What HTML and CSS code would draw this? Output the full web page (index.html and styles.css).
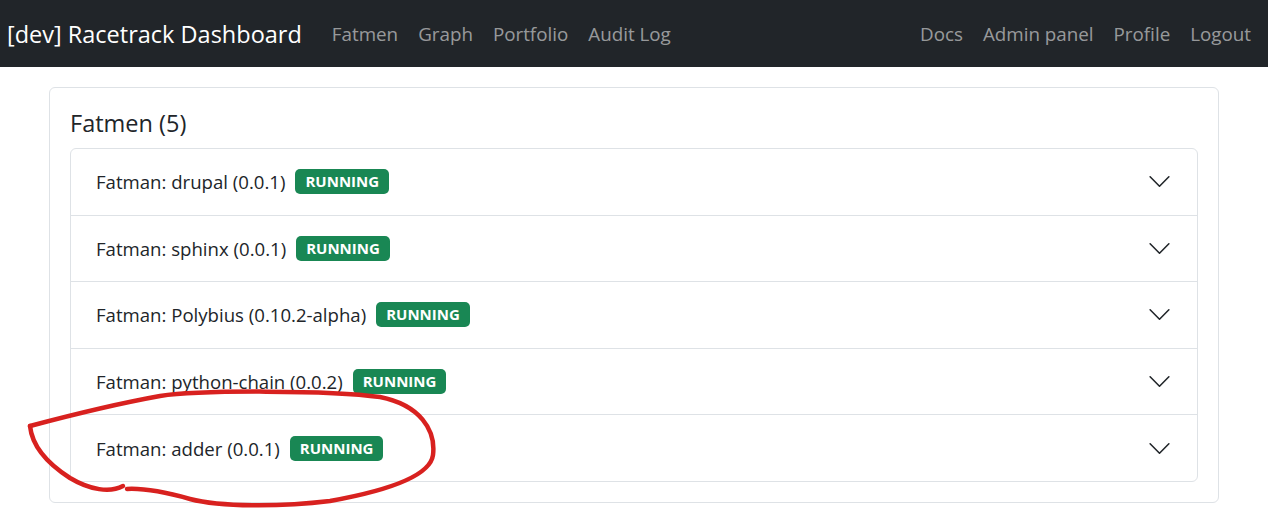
FILE: index.html
```html
<!DOCTYPE html>
<html>
<head>
<meta charset="utf-8">
<title>Racetrack Dashboard</title>
<link rel="stylesheet" href="styles.css">
</head>
<body>
<nav class="navbar">
  <a class="brand" href="#">[dev] Racetrack Dashboard</a>
  <ul class="nav">
    <li><a href="#">Fatmen</a></li>
    <li><a href="#">Graph</a></li>
    <li><a href="#">Portfolio</a></li>
    <li><a href="#">Audit Log</a></li>
  </ul>
  <ul class="nav nav-right">
    <li><a href="#">Docs</a></li>
    <li><a href="#">Admin panel</a></li>
    <li><a href="#">Profile</a></li>
    <li><a href="#">Logout</a></li>
  </ul>
</nav>
<main class="container">
  <div class="card">
    <h5 class="card-title">Fatmen (5)</h5>
    <div class="accordion">
      <div class="acc-item"><span class="acc-label">Fatman: drupal (0.0.1)</span><span class="badge">RUNNING</span><span class="chev"><svg viewBox="0 0 16 16" fill="none" stroke="#212529" stroke-linecap="round" stroke-linejoin="round"><path d="M2 5L8 11L14 5"/></svg></span></div>
      <div class="acc-item"><span class="acc-label">Fatman: sphinx (0.0.1)</span><span class="badge">RUNNING</span><span class="chev"><svg viewBox="0 0 16 16" fill="none" stroke="#212529" stroke-linecap="round" stroke-linejoin="round"><path d="M2 5L8 11L14 5"/></svg></span></div>
      <div class="acc-item"><span class="acc-label">Fatman: Polybius (0.10.2-alpha)</span><span class="badge">RUNNING</span><span class="chev"><svg viewBox="0 0 16 16" fill="none" stroke="#212529" stroke-linecap="round" stroke-linejoin="round"><path d="M2 5L8 11L14 5"/></svg></span></div>
      <div class="acc-item"><span class="acc-label">Fatman: python-chain (0.0.2)</span><span class="badge">RUNNING</span><span class="chev"><svg viewBox="0 0 16 16" fill="none" stroke="#212529" stroke-linecap="round" stroke-linejoin="round"><path d="M2 5L8 11L14 5"/></svg></span></div>
      <div class="acc-item"><span class="acc-label">Fatman: adder (0.0.1)</span><span class="badge">RUNNING</span><span class="chev"><svg viewBox="0 0 16 16" fill="none" stroke="#212529" stroke-linecap="round" stroke-linejoin="round"><path d="M2 5L8 11L14 5"/></svg></span></div>
    </div>
  </div>
</main>
<svg class="annotation" viewBox="0 0 1268 509" fill="none" stroke="#d8211f" stroke-width="4.5" stroke-linecap="round" stroke-linejoin="round">
  <path d="M30 426 C 60 418, 110 405, 160 396 C 200 390, 330 390, 380 397 C 420 405, 436 430, 433 455 C 430 478, 380 492, 330 501 C 280 507, 220 507, 190 499 C 165 492, 145 488, 127 489"/>
  <path d="M30 426 C 32 445, 45 462, 70 478 C 90 490, 110 493, 123 486"/>
</svg>
</body>
</html>
```
FILE: styles.css
```css
* { box-sizing: border-box; }
html, body { margin: 0; padding: 0; }
body {
  font-family: "Open Sans", "Noto Sans", "DejaVu Sans", sans-serif;
  font-size: 18.6px;
  color: #212529;
  background: #fff;
  position: relative;
  width: 1268px;
  height: 509px;
  overflow: hidden;
}
a { text-decoration: none; }
.navbar {
  background: #212529;
  height: 67px;
  display: flex;
  align-items: center;
  padding: 0 7px;
}
.brand {
  color: #fff;
  font-size: 23.5px;
  margin-right: 20px;
  white-space: nowrap;
}
.nav {
  list-style: none;
  margin: 0;
  padding: 0;
  display: flex;
}
.nav a {
  display: block;
  padding: 0 10px;
  color: rgba(255,255,255,0.55);
  font-size: 18.8px;
  white-space: nowrap;
}
.nav-right { margin-left: auto; }
.container {
  width: 1200px;
  margin: 0 auto;
  padding: 20px 15px 0;
}
.card {
  border: 1px solid #dee2e6;
  border-radius: 6px;
  padding: 20px;
}
.card-title {
  margin: 0 0 10px;
  font-size: 23.5px;
  font-weight: 400;
  line-height: 30px;
}
.accordion {
  border: 1px solid #dee2e6;
  border-radius: 6px;
}
.acc-item {
  display: flex;
  align-items: center;
  height: 66.6px;
  padding: 0 25px;
  border-bottom: 1px solid #dee2e6;
}
.acc-item:last-child { border-bottom: 0; height: 65.6px; }
.acc-label { white-space: nowrap; }
.badge {
  margin-left: 10px;
  background: #198754;
  color: #fff;
  font-weight: 700;
  font-size: 15px;
  line-height: 1;
  padding: 5px 10px;
  border-radius: 5px;
}
.chev {
  margin-left: auto;
  width: 25px;
  height: 25px;
  display: flex;
}
.chev svg { width: 25px; height: 25px; stroke-width: 1; }
.annotation {
  position: absolute;
  left: 0;
  top: 0;
  width: 1268px;
  height: 509px;
  pointer-events: none;
}
```
